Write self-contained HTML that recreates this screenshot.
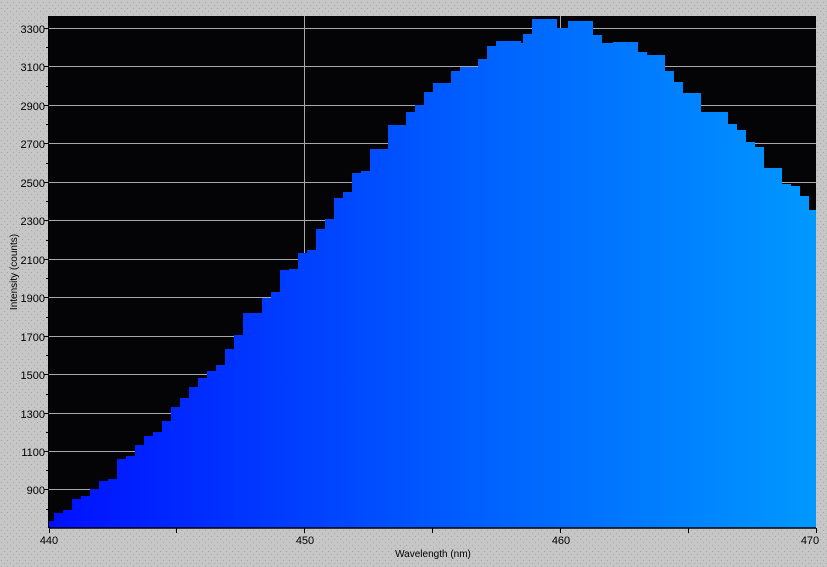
<!DOCTYPE html>
<html><head><meta charset="utf-8"><style>
html,body{margin:0;padding:0;background:#c4c4c4;}
svg{display:block;font-family:"Liberation Sans",sans-serif;}
</style></head><body>
<svg width="827" height="567" viewBox="0 0 827 567">
<defs>
<linearGradient id="g" x1="49" y1="0" x2="816" y2="0" gradientUnits="userSpaceOnUse">
<stop offset="0" stop-color="#0010ff"/>
<stop offset="0.5" stop-color="#0058ff"/>
<stop offset="1" stop-color="#0098ff"/>
</linearGradient>
<pattern id="dots" width="6" height="6" patternUnits="userSpaceOnUse">
<rect width="6" height="6" fill="#c6c6c6"/><rect x="1" y="2" width="1" height="1" fill="#a8a8a8"/><rect x="4" y="5" width="1" height="1" fill="#a8a8a8"/>
</pattern>
</defs>
<rect width="827" height="567" fill="url(#dots)"/>
<rect x="49" y="16" width="767" height="512" fill="#040306"/>
<g stroke="#a8a8a8" stroke-width="1">
<line x1="49" x2="816" y1="28.5" y2="28.5"/>
<line x1="49" x2="816" y1="66.5" y2="66.5"/>
<line x1="49" x2="816" y1="105.5" y2="105.5"/>
<line x1="49" x2="816" y1="143.5" y2="143.5"/>
<line x1="49" x2="816" y1="182.5" y2="182.5"/>
<line x1="49" x2="816" y1="220.5" y2="220.5"/>
<line x1="49" x2="816" y1="259.5" y2="259.5"/>
<line x1="49" x2="816" y1="297.5" y2="297.5"/>
<line x1="49" x2="816" y1="336.5" y2="336.5"/>
<line x1="49" x2="816" y1="374.5" y2="374.5"/>
<line x1="49" x2="816" y1="413.5" y2="413.5"/>
<line x1="49" x2="816" y1="451.5" y2="451.5"/>
<line x1="49" x2="816" y1="489.5" y2="489.5"/>
<line x1="304.5" x2="304.5" y1="16" y2="528"/>
<line x1="560.5" x2="560.5" y1="16" y2="528"/>
</g>
<path fill="url(#g)" d="M49 528 V521 H54 V513 H63 V510 H72 V499 H81 V496 H90 V489 H99 V481 H108 V479 H117 V459 H126 V456 H135 V445 H144 V436 H153 V432 H162 V421 H171 V407 H180 V398 H189 V387 H198 V378 H207 V371 H216 V365 H225 V349 H234 V335 H243 V313 H262 V298 H271 V292 H280 V270 H289 V269 H298 V253 H307 V250 H316 V229 H325 V219 H334 V198 H343 V192 H352 V173 H361 V171 H370 V149 H388 V125 H406 V112 H415 V105 H424 V92 H433 V83 H451 V71 H460 V67 H478 V59 H487 V46 H496 V41 H521 V43 H523 V34 H532 V19 H557 V28 H568 V21 H593 V35 H602 V43 H613 V42 H638 V52 H647 V55 H665 V71 H674 V82 H683 V93 H701 V112 H728 V124 H737 V130 H746 V142 H755 V147 H764 V168 H782 V184 H791 V186 H800 V196 H809 V210 H816 V528 Z"/>
<line x1="49" x2="816" y1="528" y2="528" stroke="#000" stroke-width="1.5"/>
<line x1="48.5" x2="48.5" y1="16" y2="528" stroke="#000"/>
<g stroke="#000">
<path d="M44 28.5h5M44 66.5h5M44 105.5h5M44 143.5h5M44 182.5h5M44 220.5h5M44 259.5h5M44 297.5h5M44 336.5h5M44 374.5h5M44 413.5h5M44 451.5h5M44 489.5h5"/>
<path d="M46 47.5h3M46 86.5h3M46 124.5h3M46 163.5h3M46 201.5h3M46 240.5h3M46 278.5h3M46 317.5h3M46 355.5h3M46 394.5h3M46 432.5h3M46 470.5h3M46 509.5h3"/>
<path d="M49.5 528v5M176.5 528v5M304.5 528v5M432.5 528v5M560.5 528v5M688.5 528v5M816.5 528v5"/>
</g>
<g font-size="11" fill="#000" text-anchor="end">
<text x="45" y="33">3300</text><text x="45" y="71">3100</text><text x="45" y="110">2900</text>
<text x="45" y="148">2700</text><text x="45" y="187">2500</text><text x="45" y="225">2300</text>
<text x="45" y="264">2100</text><text x="45" y="302">1900</text><text x="45" y="341">1700</text>
<text x="45" y="379">1500</text><text x="45" y="418">1300</text><text x="45" y="456">1100</text>
<text x="45" y="494">900</text>
</g>
<g font-size="11" fill="#000" text-anchor="middle">
<text x="49" y="544">440</text><text x="305" y="544">450</text><text x="561" y="544">460</text><text x="810" y="544">470</text>
<text x="433" y="557" font-size="10">Wavelength (nm)</text>
<text x="0" y="0" font-size="10" transform="translate(17 272) rotate(-90)">Intensity (counts)</text>
</g>
</svg>
</body></html>
